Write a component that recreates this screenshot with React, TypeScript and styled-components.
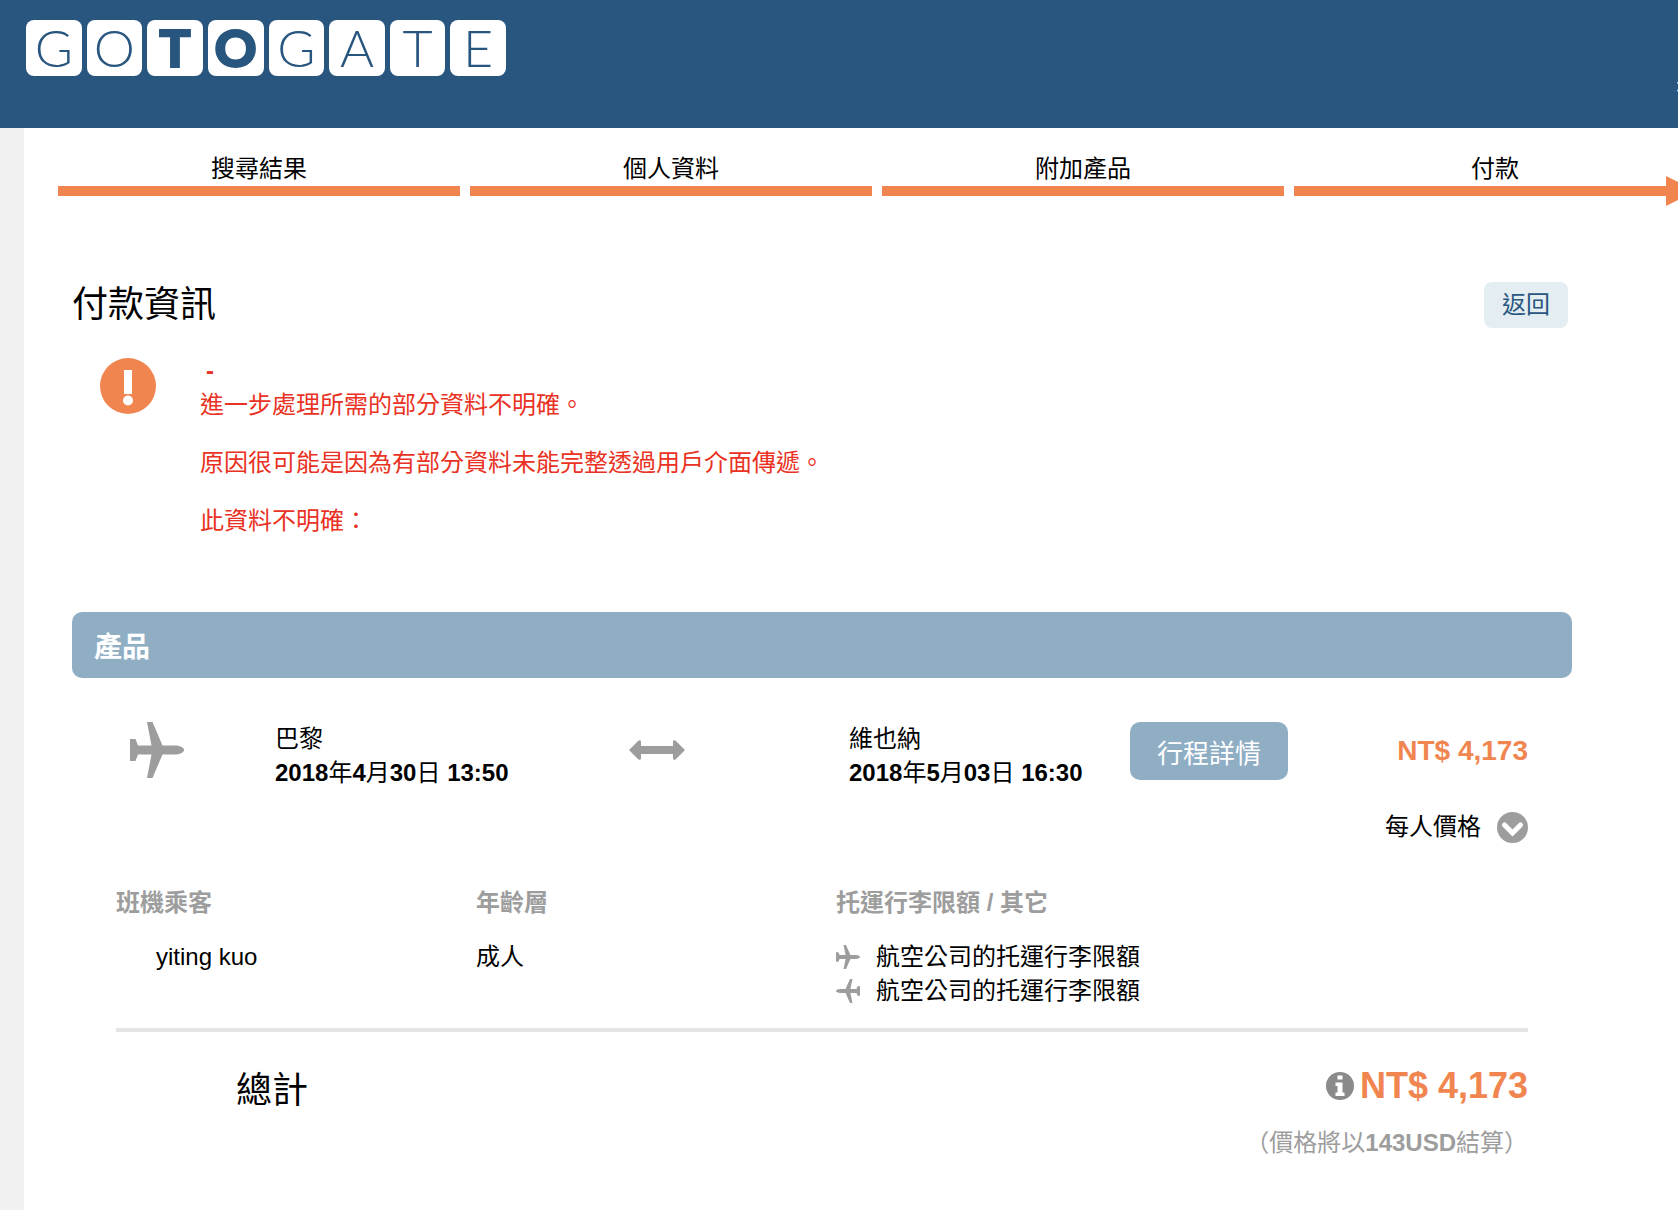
import React from "react";
import styled, { createGlobalStyle } from "styled-components";

const navy = "#28567e";
const orange = "#f18550";
const steel = "#8faec4";
const grey = "#9d9d9d";

const GlobalStyle = createGlobalStyle`
  *, *::before, *::after { box-sizing: border-box; }
  body {
    margin: 0;
    background: #f1f1f1;
    color: #000;
    font: 24px/34px "Liberation Sans", "Noto Sans CJK TC", sans-serif;
    overflow-x: hidden;
  }
  h1, h2, p { margin: 0; font-weight: 400; }
  button { border: 0; font: inherit; cursor: pointer; }
  svg { display: block; flex: none; }
`;

const Page = styled.div`
  min-height: 100vh;
  display: flex;
  flex-direction: column;
  overflow-x: clip;
`;

const Header = styled.header`
  display: flex;
  justify-content: space-between;
  align-items: flex-start;
  height: 128px;
  padding: 20px 0 0 26px;
  background: ${navy};
`;

const Logo = styled.a`
  display: grid;
  grid-template-columns: repeat(8, 1fr);
  gap: 5px;
  width: 480px;
  text-decoration: none;
`;

const Tile = styled.span<{ $heavy?: boolean }>`
  display: flex;
  justify-content: center;
  align-items: center;
  height: 56px;
  border-radius: 8px;
  background: #fff;
  color: ${navy};
  font: ${(p) => (p.$heavy ? 900 : 300)} 52px/54px Lato, sans-serif;
  padding-bottom: 2px;
  -webkit-text-stroke: ${(p) => (p.$heavy ? 2 : 0)}px ${navy};
`;

const TopNav = styled.nav`
  margin: 52px -78px 0 0;
`;

const TopLink = styled.a`
  color: #fff;
  font-size: 20px;
  text-decoration: none;
`;

const Content = styled.main`
  flex: 1;
  margin-left: 24px;
  padding-top: 24px;
  background: #fff;
`;

const Steps = styled.ol`
  display: grid;
  grid-template-columns: repeat(4, 1fr);
  gap: 10px;
  margin: 0 -18px 0 34px;
  padding: 0;
  list-style: none;
`;

const Step = styled.li`
  position: relative;
  height: 44px;
  border-bottom: 10px solid ${orange};
  text-align: center;
  line-height: 34px;
`;

const ArrowHead = styled.svg`
  position: absolute;
  right: 0;
  bottom: -20px;
`;

const Panel = styled.div`
  margin: 0 106px 0 48px;
`;

const TitleRow = styled.div`
  display: flex;
  justify-content: space-between;
  align-items: center;
  margin-top: 86px;
  padding-right: 4px;
`;

const Title = styled.h1`
  font-size: 36px;
  line-height: 46px;
`;

const BackButton = styled.button`
  height: 46px;
  padding: 0 18px;
  border-radius: 8px;
  background: #e4edf2;
  color: ${navy};
`;

const Alert = styled.section`
  display: flex;
  gap: 44px;
  margin-top: 26px;
  padding-left: 28px;
  color: #e93223;
`;

const AlertIcon = styled.svg`
  margin-top: 4px;
`;

const AlertText = styled.div`
  display: flex;
  flex-direction: column;
  gap: 24px;
`;

const Dash = styled.strong`
  display: block;
  padding-left: 6px;
`;

const SectionTitle = styled.h2`
  margin-top: 74px;
  padding: 6px 22px 0;
  border-radius: 10px;
  background: ${steel};
  color: #fff;
  font-size: 28px;
  font-weight: 700;
  line-height: 60px;
`;

const Body = styled.div`
  padding: 44px 44px 0;
`;

const Trip = styled.div`
  display: grid;
  grid-template-columns: 159px 354px 220px 281px 1fr auto;
  align-items: start;
`;

const IconCell = styled.div`
  padding-left: 14px;
`;

const ArrowCell = styled.div`
  padding-top: 18px;
`;

const Place = styled.div``;

const DateLine = styled.p`
  font-weight: 700;
`;

const Unit = styled.span`
  font-weight: 400;
`;

const DetailsButton = styled.button`
  justify-self: start;
  height: 58px;
  padding: 6px 27px 0;
  border-radius: 10px;
  background: ${steel};
  color: #fff;
  font-size: 26px;
`;

const Price = styled.strong<{ $large?: boolean }>`
  color: ${orange};
  font-size: ${(p) => (p.$large ? 36 : 28)}px;
`;

const PriceCell = styled.div`
  padding-top: 12px;
`;

const PerPerson = styled.button`
  display: flex;
  align-items: center;
  gap: 16px;
  margin: 20px 0 0 auto;
  padding: 0;
  background: none;
  color: #000;
`;

const Passengers = styled.table`
  width: 100%;
  margin-top: 42px;
  border-collapse: collapse;
  table-layout: fixed;
  border-bottom: 4px solid #e5e5e5;

  th, td { padding: 0; text-align: left; vertical-align: top; }
  th { color: ${grey}; padding-bottom: 20px; }
  th:nth-child(-n + 2) { width: 360px; }
  td { padding-bottom: 20px; }
`;

const Name = styled.span`
  padding-left: 40px;
`;

const Bag = styled.div<{ $back?: boolean }>`
  display: flex;
  align-items: center;
  gap: 16px;

  svg { transform: ${(p) => (p.$back ? "scaleX(-1)" : "none")}; }
`;

const Total = styled.div`
  display: flex;
  justify-content: space-between;
  align-items: flex-start;
  margin-top: 32px;
  padding-left: 120px;
`;

const TotalLabel = styled.h2`
  padding-top: 4px;
  font-size: 36px;
  line-height: 46px;
`;

const TotalPrice = styled.div`
  display: flex;
  align-items: center;
  gap: 6px;
  height: 44px;
`;

const Note = styled.p`
  margin-top: 12px;
  color: ${grey};
  text-align: right;
`;

const Plane = ({ width, height }: { width: number; height: number }) => (
  <svg width={width} height={height} viewBox="0 0 54 56" preserveAspectRatio="none" aria-hidden="true">
    <path
      fill={grey}
      d="M17 0h5.500l10 23.500h12c5 0 9.500 2 9.500 4.500s-4.500 4.500-9.500 4.500h-12L22.500 56H17l4.500-23.500H8L5.500 39H0V17h5.500L8 23.500h13.500z"
    />
  </svg>
);

const When = ({ y, m, d, time }: { y: string; m: string; d: string; time: string }) => (
  <DateLine>
    {y}<Unit>年</Unit>{m}<Unit>月</Unit>{d}<Unit>日</Unit> {time}
  </DateLine>
);

const steps = ["搜尋結果", "個人資料", "附加產品", "付款"];

export default function App() {
  return (
    <Page>
      <GlobalStyle />
      <Header>
        <Logo href="#">
          {"GOTOGATE".split("").map((letter, i) => (
            <Tile key={i} $heavy={i === 2 || i === 3}>{letter}</Tile>
          ))}
        </Logo>
        <TopNav>
          <TopLink href="#">有關我們</TopLink>
        </TopNav>
      </Header>
      <Content>
        <Steps>
          {steps.map((label, i) => (
            <Step key={label}>
              {label}
              {i === steps.length - 1 && (
                <ArrowHead width="30" height="30" viewBox="0 0 30 30" aria-hidden="true">
                  <path d="M0 0l30 15L0 30z" fill={orange} />
                </ArrowHead>
              )}
            </Step>
          ))}
        </Steps>
        <Panel>
          <TitleRow>
            <Title>付款資訊</Title>
            <BackButton type="button">返回</BackButton>
          </TitleRow>
          <Alert>
            <AlertIcon width="56" height="56" viewBox="0 0 56 56" aria-hidden="true">
              <circle cx="28" cy="28" r="28" fill={orange} />
              <rect x="24" y="12" width="8" height="24" fill="#fff" />
              <circle cx="28" cy="42.500" r="5" fill="#fff" />
            </AlertIcon>
            <AlertText>
              <p>
                <Dash>-</Dash>
                進一步處理所需的部分資料不明確。
              </p>
              <p>原因很可能是因為有部分資料未能完整透過用戶介面傳遞。</p>
              <p>此資料不明確：</p>
            </AlertText>
          </Alert>
          <SectionTitle>產品</SectionTitle>
          <Body>
            <Trip>
              <IconCell><Plane width={54} height={56} /></IconCell>
              <Place>
                <p>巴黎</p>
                <When y="2018" m="4" d="30" time="13:50" />
              </Place>
              <ArrowCell>
                <svg width="56" height="20" viewBox="0 0 56 20" aria-hidden="true">
                  <path
                    fill={grey}
                    d="M0 10L9 1c1.500-1.500 3-1 3 1v4h32V2c0-2 1.500-2.500 3-1l9 9-9 9c-1.500 1.500-3 1-3-1v-4H12v4c0 2-1.500 2.500-3 1z"
                  />
                </svg>
              </ArrowCell>
              <Place>
                <p>維也納</p>
                <When y="2018" m="5" d="03" time="16:30" />
              </Place>
              <DetailsButton type="button">行程詳情</DetailsButton>
              <PriceCell>
                <Price>NT$ 4,173</Price>
              </PriceCell>
            </Trip>
            <PerPerson type="button">
              每人價格
              <svg width="31" height="31" viewBox="0 0 31 31" aria-hidden="true">
                <circle cx="15.500" cy="15.500" r="15.500" fill={grey} />
                <path d="M7.500 13l8 8 8-8" fill="none" stroke="#fff" strokeWidth="5" strokeLinecap="round" />
              </svg>
            </PerPerson>
            <Passengers>
              <thead>
                <tr>
                  <th>班機乘客</th>
                  <th>年齡層</th>
                  <th>托運行李限額 / 其它</th>
                </tr>
              </thead>
              <tbody>
                <tr>
                  <td><Name>yiting kuo</Name></td>
                  <td>成人</td>
                  <td>
                    <Bag><Plane width={24} height={24} />航空公司的托運行李限額</Bag>
                    <Bag $back><Plane width={24} height={24} />航空公司的托運行李限額</Bag>
                  </td>
                </tr>
              </tbody>
            </Passengers>
            <Total>
              <TotalLabel>總計</TotalLabel>
              <TotalPrice>
                <svg width="28" height="28" viewBox="0 0 28 28" aria-hidden="true">
                  <circle cx="14" cy="14" r="14" fill="#8a8a8a" />
                  <path d="M11.500 3.500h5v4h-5zM9.500 10.500h7v10h2v3.500h-9v-3.500h2V14h-2z" fill="#fff" />
                </svg>
                <Price $large>NT$ 4,173</Price>
              </TotalPrice>
            </Total>
            <Note>（價格將以<strong>143USD</strong>結算）</Note>
          </Body>
        </Panel>
      </Content>
    </Page>
  );
}
